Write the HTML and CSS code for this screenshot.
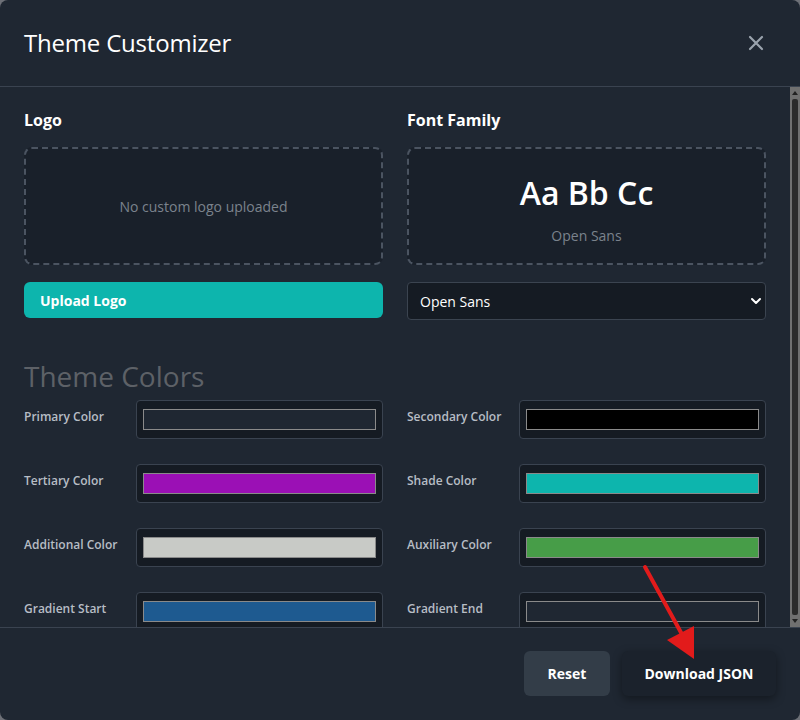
FILE: index.html
```html
<!DOCTYPE html>
<html lang="en">
<head>
    <meta charset="UTF-8">
    <meta name="viewport" content="width=device-width, initial-scale=1.0">
    <title>Theme Customizer</title>
    <link rel="stylesheet" href="styles.css">
</head>
<body>
    <div class="modal">
        <div class="modal-header">
            <h2 class="modal-title">Theme Customizer</h2>
            <button class="close-btn" aria-label="Close">
                <svg width="16" height="16" viewBox="0 0 16 16">
                    <path d="M2 2 L14 14 M14 2 L2 14" stroke="#9aa3ad" stroke-width="2.2" stroke-linecap="round"/>
                </svg>
            </button>
        </div>

        <div class="body-wrap">
            <div class="modal-body">
                <div class="top-grid">
                    <div class="field">
                        <label class="field-label">Logo</label>
                        <div class="drop-box">
                            <span class="muted">No custom logo uploaded</span>
                        </div>
                        <button class="upload-btn">Upload Logo</button>
                    </div>
                    <div class="field">
                        <label class="field-label">Font Family</label>
                        <div class="drop-box preview">
                            <span class="preview-text">Aa Bb Cc</span>
                            <span class="muted">Open Sans</span>
                        </div>
                        <div class="select-wrap">
                            <select class="font-select">
                                <option>Open Sans</option>
                                <option>Roboto</option>
                                <option>Lato</option>
                                <option>Inter</option>
                            </select>
                            <!-- chevron over the select -->
                            <svg class="chevron" width="12" height="12" viewBox="0 0 12 12">
                                <path d="M2 4 L6 8 L10 4" fill="none" stroke="#fff" stroke-width="2" stroke-linecap="round" stroke-linejoin="round"/>
                            </svg>
                        </div>
                    </div>
                </div>

                <h3 class="section-title">Theme Colors</h3>

                <div class="color-grid">
                    <div class="color-row">
                        <span class="color-label">Primary Color</span>
                        <div class="color-box"><div class="swatch" style="background:#1f2732"></div></div>
                    </div>
                    <div class="color-row">
                        <span class="color-label">Secondary Color</span>
                        <div class="color-box"><div class="swatch" style="background:#000000"></div></div>
                    </div>
                    <div class="color-row">
                        <span class="color-label">Tertiary Color</span>
                        <div class="color-box"><div class="swatch" style="background:#9b10b5"></div></div>
                    </div>
                    <div class="color-row">
                        <span class="color-label">Shade Color</span>
                        <div class="color-box"><div class="swatch" style="background:#0db5ad"></div></div>
                    </div>
                    <div class="color-row">
                        <span class="color-label">Additional Color</span>
                        <div class="color-box"><div class="swatch" style="background:#c8cac6"></div></div>
                    </div>
                    <div class="color-row">
                        <span class="color-label">Auxiliary Color</span>
                        <div class="color-box"><div class="swatch" style="background:#479d48"></div></div>
                    </div>
                    <div class="color-row">
                        <span class="color-label">Gradient Start</span>
                        <div class="color-box"><div class="swatch" style="background:#1e5a90"></div></div>
                    </div>
                    <div class="color-row">
                        <span class="color-label">Gradient End</span>
                        <div class="color-box"><div class="swatch" style="background:#1f2732"></div></div>
                    </div>
                </div>
            </div>

            <!-- classic scrollbar of the body -->
            <div class="scrollbar">
                <span class="arrow-up"></span>
                <div class="thumb"></div>
                <span class="arrow-down"></span>
            </div>
        </div>

        <div class="modal-footer">
            <button class="btn btn-reset">Reset</button>
            <button class="btn btn-download">Download JSON</button>
        </div>

        <!-- red annotation arrow -->
        <svg class="annotation" width="800" height="720" viewBox="0 0 800 720">
            <line x1="645" y1="567" x2="684" y2="638" stroke="#e21b1b" stroke-width="4" stroke-linecap="round"/>
            <polygon points="667,640 694,626 694,659" fill="#e21b1b"/>
        </svg>
    </div>
</body>
</html>
```

FILE: styles.css
```css
* {
    box-sizing: border-box;
}

html, body {
    margin: 0;
    padding: 0;
    height: 100%;
    background-color: #6d7077;
}

body {
    font-family: "Open Sans", "Noto Sans", sans-serif;
    color: #fff;
}

.modal {
    position: relative;
    height: 720px;
    display: flex;
    flex-direction: column;
    background-color: #1f2732;
    border-radius: 8px;
    overflow: hidden;
}

.modal-header {
    height: 87px;
    flex-shrink: 0;
    display: flex;
    align-items: center;
    justify-content: space-between;
    padding: 0 36px 0 24px;
    border-bottom: 1px solid #3a4350;
}

.modal-title {
    margin: 0 0 2px 0;
    font-size: 24px;
    font-weight: 400;
    letter-spacing: -0.2px;
}

.close-btn {
    background: none;
    border: none;
    padding: 0;
    width: 16px;
    height: 16px;
    cursor: pointer;
}

.body-wrap {
    flex: 1;
    min-height: 0;
    display: flex;
}

.modal-body {
    flex: 1;
    overflow: hidden;
    padding: 21px 24px 24px 24px;
}

.scrollbar {
    width: 10px;
    flex-shrink: 0;
    background-color: #707070;
    display: flex;
    flex-direction: column;
    align-items: center;
    padding: 4px 0 4px 0;
}

.arrow-up,
.arrow-down {
    width: 0;
    height: 0;
    border-left: 3px solid transparent;
    border-right: 3px solid transparent;
}

.arrow-up {
    border-bottom: 4px solid #222;
}

.arrow-down {
    border-top: 4px solid #222;
}

.thumb {
    flex: 1;
    width: 6px;
    margin: 4px 0;
    background-color: #2b2b2b;
    border-radius: 2px;
}

.top-grid {
    display: grid;
    grid-template-columns: 1fr 1fr;
    gap: 24px;
}

.field {
    display: flex;
    flex-direction: column;
}

.field-label {
    font-size: 16px;
    font-weight: 700;
    line-height: 24px;
    margin-bottom: 15px;
}

.drop-box {
    height: 118px;
    border: 2px dashed #4b5461;
    border-radius: 8px;
    background-color: #19202a;
    display: flex;
    flex-direction: column;
    align-items: center;
    justify-content: center;
}

.muted {
    font-size: 14px;
    color: #7b838d;
}

.preview {
    gap: 14px;
    padding-top: 6px;
}

.preview-text {
    font-size: 32px;
    font-weight: 600;
    line-height: 38px;
}

.upload-btn {
    margin-top: 17px;
    height: 36px;
    border: none;
    border-radius: 6px;
    background-color: #0db5ad;
    color: #fff;
    font-family: inherit;
    font-size: 14px;
    font-weight: 700;
    text-align: left;
    padding: 0 16px;
}

.select-wrap {
    position: relative;
    margin-top: 17px;
}

.font-select {
    width: 100%;
    height: 38px;
    appearance: none;
    -webkit-appearance: none;
    background-color: #151b23;
    border: 1px solid #3b4450;
    border-radius: 4px;
    color: #fff;
    font-family: inherit;
    font-size: 14px;
    padding: 0 12px;
}

.chevron {
    position: absolute;
    right: 4px;
    top: 13px;
}

.section-title {
    margin: 38px 0 6px 0;
    font-size: 28px;
    font-weight: 400;
    line-height: 36px;
    color: #5d6167;
}

.color-grid {
    display: grid;
    grid-template-columns: 1fr 1fr;
    column-gap: 24px;
    row-gap: 25px;
}

.color-row {
    display: flex;
    align-items: flex-start;
}

.color-label {
    width: 112px;
    flex-shrink: 0;
    font-size: 12px;
    font-weight: 600;
    color: #b7bdc5;
    margin-top: 8px;
}

.color-box {
    flex: 1;
    height: 39px;
    background-color: #151b23;
    border: 1px solid #3a4350;
    border-radius: 4px;
    padding: 8px 6px;
}

.swatch {
    height: 100%;
    border: 1px solid #8a8a8a;
}

.modal-footer {
    height: 93px;
    flex-shrink: 0;
    border-top: 1px solid #3a4350;
    display: flex;
    align-items: center;
    justify-content: flex-end;
    gap: 12px;
    padding: 0 24px 2px 0;
}

.btn {
    height: 45px;
    border: none;
    border-radius: 6px;
    color: #fff;
    font-family: inherit;
    font-size: 14px;
    font-weight: 700;
    cursor: pointer;
}

.btn-reset {
    width: 86px;
    background-color: #333d48;
}

.btn-download {
    width: 154px;
    background-color: #1b222c;
    box-shadow: 0 3px 10px rgba(0, 0, 0, 0.4);
}

.annotation {
    position: absolute;
    top: 0;
    left: 0;
    pointer-events: none;
}
```
